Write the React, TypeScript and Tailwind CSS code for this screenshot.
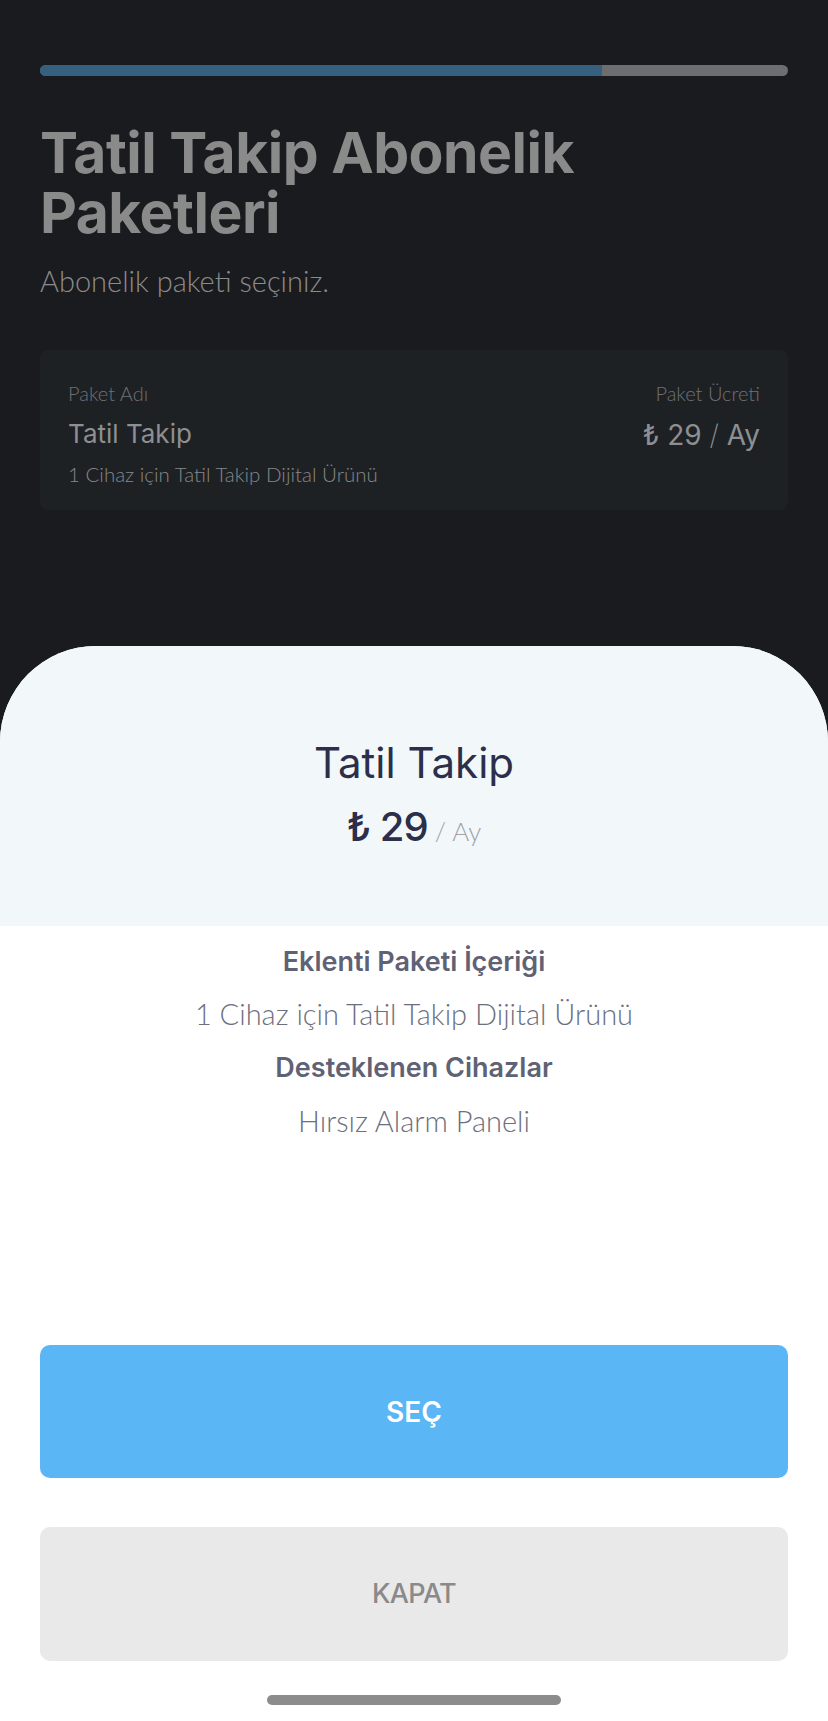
import React from 'react';

type Pkg = {
  name: string;
  price: number;
  period: string;
  description: string;
  devices: string;
};

const selected: Pkg = {
  name: 'Tatil Takip',
  price: 29,
  period: 'Ay',
  description: '1 Cihaz için Tatil Takip Dijital Ürünü',
  devices: 'Hırsız Alarm Paneli',
};

function StepBar({ progress }: { progress: number }) {
  return (
    <div className="h-[11px] w-full rounded-full bg-[#6e6e70] overflow-hidden flex">
      <div className="h-full bg-[#35607f] rounded-l-full" style={{ width: `${progress}%` }} />
    </div>
  );
}

function PackageCard({ pkg }: { pkg: Pkg }) {
  return (
    <div className="mt-[51px] h-[160px] rounded-[8px] bg-[#1e2124] px-[28px] pt-[31px] flex justify-between">
      <div className="flex flex-col">
        <span className="font-[family-name:Lato,sans-serif] text-[20px] leading-[24px] font-light text-[#6f7074]">
          Paket Adı
        </span>
        <span className="mt-[13px] text-[26px] leading-[32px] text-[#8d8f92]">{pkg.name}</span>
        <span className="mt-[12px] font-[family-name:Lato,sans-serif] text-[20.5px] leading-[24px] font-light text-[#85878a]">
          {pkg.description}
        </span>
      </div>
      <div className="flex flex-col items-end">
        <span className="font-[family-name:Lato,sans-serif] text-[20px] leading-[24px] font-light text-[#6f7074]">
          Paket Ücreti
        </span>
        <span className="mt-[14px] text-[28px] leading-[32px] text-[#8d8f92]">
          ₺ {pkg.price} <span className="font-extralight">/</span> {pkg.period}
        </span>
      </div>
    </div>
  );
}

export default function App() {
  return (
    <div className="h-[1721px] w-full bg-[#1a1b1f] flex flex-col overflow-hidden font-[family-name:Inter,sans-serif]">
      {/* dimmed page behind the sheet */}
      <div className="px-[40px] pt-[65px]">
        <StepBar progress={75.2} />
        <h1 className="mt-[47px] flex flex-col text-[57px] leading-[60px] font-bold tracking-[-0.5px] text-[#8a8a8b]">
          <span>Tatil Takip Abonelik</span>
          <span>Paketleri</span>
        </h1>
        <p className="mt-[20px] font-[family-name:Lato,sans-serif] text-[29px] leading-[36px] font-light text-[#8b8b8d]">
          Abonelik paketi seçiniz.
        </p>
        <PackageCard pkg={selected} />
      </div>

      {/* bottom sheet */}
      <div className="mt-auto bg-white rounded-t-[96px] flex flex-col">
        <div className="h-[280px] rounded-t-[96px] bg-[#f2f7fa] flex flex-col items-center pt-[92px]">
          <span className="text-[42px] leading-[50px] text-[#2b2f4a]">{selected.name}</span>
          <div className="mt-[15px] flex items-baseline leading-[48px]">
            <span className="text-[40px] font-medium tracking-[-1px] text-[#2b2f4a]">₺ {selected.price}</span>
            <span className="ml-[7px] font-[family-name:Lato,sans-serif] text-[26px] font-light text-[#9fa2a9]">
              / {selected.period}
            </span>
          </div>
        </div>

        <div className="flex flex-col items-center pt-[20px] text-center">
          <span className="text-[27px] leading-[32px] font-semibold text-[#5f6275]">Eklenti Paketi İçeriği</span>
          <span className="mt-[18px] font-[family-name:Lato,sans-serif] text-[29px] leading-[36px] font-light text-[#6c6f7d]">
            {selected.description}
          </span>
          <span className="mt-[20px] text-[27px] leading-[32px] font-semibold text-[#5f6275]">Desteklenen Cihazlar</span>
          <span className="mt-[19px] font-[family-name:Lato,sans-serif] text-[29px] leading-[36px] font-light text-[#6c6f7d]">
            {selected.devices}
          </span>
        </div>

        <div className="px-[40px] flex flex-col">
          <button className="mt-[206px] h-[133px] rounded-[10px] bg-[#5bb6f5] text-white text-[28px] font-semibold flex items-center justify-center">
            SEÇ
          </button>
          <button className="mt-[49px] h-[134px] rounded-[10px] bg-[#e9e9e9] text-[#8a8a8a] text-[27px] font-medium tracking-tight flex items-center justify-center">
            KAPAT
          </button>
        </div>

        <div className="mt-[34px] mb-[16px] h-[10px] w-[294px] self-center rounded-full bg-[#8c8c8c]" />
      </div>
    </div>
  );
}
